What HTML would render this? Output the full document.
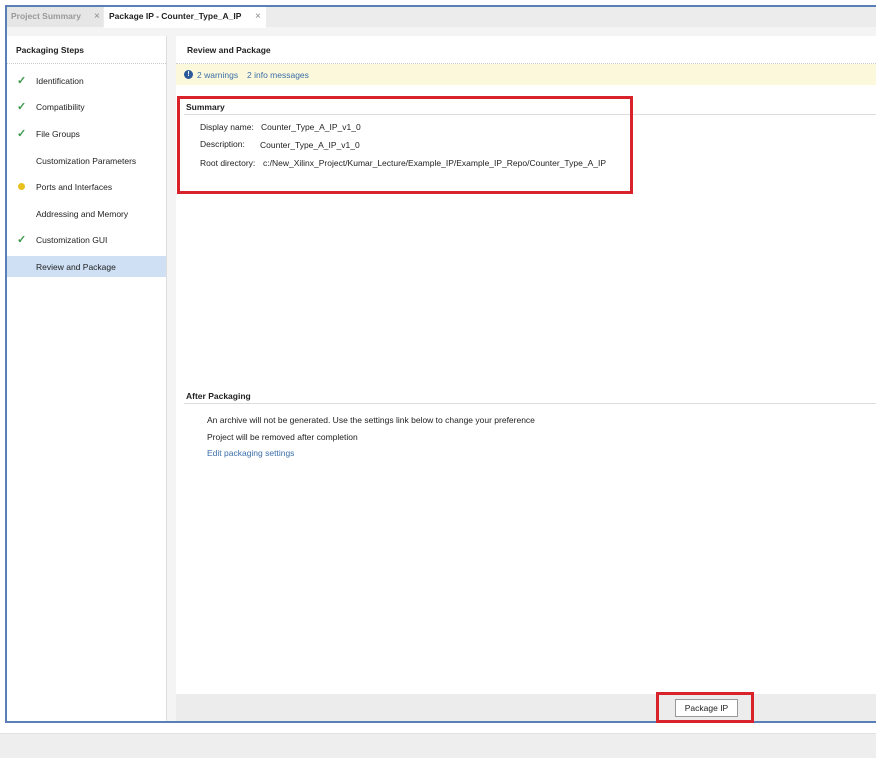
<!DOCTYPE html>
<html><head><style>
body{margin:0;width:876px;height:768px;background:#fff;position:relative;overflow:hidden;font-family:"Liberation Sans",Arial,sans-serif;font-size:8.5px;color:#222}
.a{position:absolute;white-space:nowrap}
.b{font-weight:bold}
.lnk{color:#3a6ea8}
.ck{color:#3a9a4a;font-size:11px;font-weight:bold}
</style></head><body>
<div class="a" style="left:5px;top:5px;width:875px;height:718px;border:2px solid #5a7fb8;border-right:none;box-sizing:border-box;background:#f4f4f4"></div>
<div class="a" style="left:7px;top:7px;width:869px;height:20px;background:#ececec"></div>
<div class="a" style="left:7px;top:7px;width:96px;height:20px;background:#e6e6e6"></div>
<div class="a" style="left:11px;top:11px;color:#999"><b>Project Summary</b></div>
<div class="a" style="left:94px;top:11px;color:#888;font-size:10px">×</div>
<div class="a" style="left:104px;top:7px;width:162px;height:21px;background:#fff"></div>
<div class="a b" style="left:109px;top:11px">Package IP - Counter_Type_A_IP</div>
<div class="a" style="left:255px;top:11px;color:#888;font-size:10px">×</div>
<div class="a" style="left:7px;top:36px;width:159px;height:685px;background:#fff;border-right:1px solid #ddd"></div>
<div class="a b" style="left:16px;top:45px">Packaging Steps</div>
<div class="a" style="left:7px;top:63px;width:159px;border-top:1px dotted #ccc"></div>
<div class="a" style="left:7px;top:256px;width:159px;height:21px;background:#cfe0f5"></div>
<div class="a ck" style="left:17px;top:74px">✓</div>
<div class="a ck" style="left:17px;top:100px">✓</div>
<div class="a ck" style="left:17px;top:127px">✓</div>
<div class="a" style="left:18px;top:183px;width:7px;height:7px;border-radius:50%;background:#e8c020"></div>
<div class="a ck" style="left:17px;top:233px">✓</div>
<div class="a" style="left:36px;top:76px">Identification</div>
<div class="a" style="left:36px;top:102px">Compatibility</div>
<div class="a" style="left:36px;top:129px">File Groups</div>
<div class="a" style="left:36px;top:156px">Customization Parameters</div>
<div class="a" style="left:36px;top:182px">Ports and Interfaces</div>
<div class="a" style="left:36px;top:209px">Addressing and Memory</div>
<div class="a" style="left:36px;top:235px">Customization GUI</div>
<div class="a" style="left:36px;top:262px">Review and Package</div>
<div class="a" style="left:176px;top:36px;width:700px;height:685px;background:#fff"></div>
<div class="a b" style="left:187px;top:45px">Review and Package</div>
<div class="a" style="left:176px;top:63px;width:700px;border-top:1px dotted #ccc"></div>
<div class="a" style="left:176px;top:64px;width:700px;height:21px;background:#fcf8dc"></div>
<div class="a" style="left:184px;top:70px;width:9px;height:9px;border-radius:50%;background:#2d5a9a;color:#fff;font-size:7px;text-align:center;line-height:9px;font-weight:bold">!</div>
<div class="a lnk" style="left:197px;top:70px">2 warnings</div>
<div class="a lnk" style="left:247px;top:70px">2 info messages</div>
<div class="a b" style="left:186px;top:102px">Summary</div>
<div class="a" style="left:184px;top:114px;width:692px;border-top:1px solid #ddd"></div>
<div class="a" style="left:200px;top:122px">Display name:</div>
<div class="a" style="left:261px;top:122px">Counter_Type_A_IP_v1_0</div>
<div class="a" style="left:200px;top:139px">Description:</div>
<div class="a" style="left:260px;top:140px">Counter_Type_A_IP_v1_0</div>
<div class="a" style="left:200px;top:158px">Root directory:</div>
<div class="a" style="left:263px;top:158px">c:/New_Xilinx_Project/Kumar_Lecture/Example_IP/Example_IP_Repo/Counter_Type_A_IP</div>
<div class="a" style="left:177px;top:96px;width:456px;height:98px;border:3px solid #d8232a;box-sizing:border-box"></div>
<div class="a b" style="left:186px;top:391px">After Packaging</div>
<div class="a" style="left:184px;top:403px;width:692px;border-top:1px solid #ddd"></div>
<div class="a" style="left:207px;top:415px">An archive will not be generated. Use the settings link below to change your preference</div>
<div class="a" style="left:207px;top:432px">Project will be removed after completion</div>
<div class="a lnk" style="left:207px;top:448px">Edit packaging settings</div>
<div class="a" style="left:176px;top:694px;width:700px;height:27px;background:#ececec"></div>
<div class="a" style="left:675px;top:699px;width:63px;height:18px;border:1px solid #999;background:#fff;box-sizing:border-box;text-align:center;line-height:16px">Package IP</div>
<div class="a" style="left:656px;top:692px;width:98px;height:31px;border:3px solid #d8232a;box-sizing:border-box"></div>
<div class="a" style="left:0;top:733px;width:876px;height:24px;background:#eeeeee;border-top:1px solid #e2e2e2"></div>
</body></html>
